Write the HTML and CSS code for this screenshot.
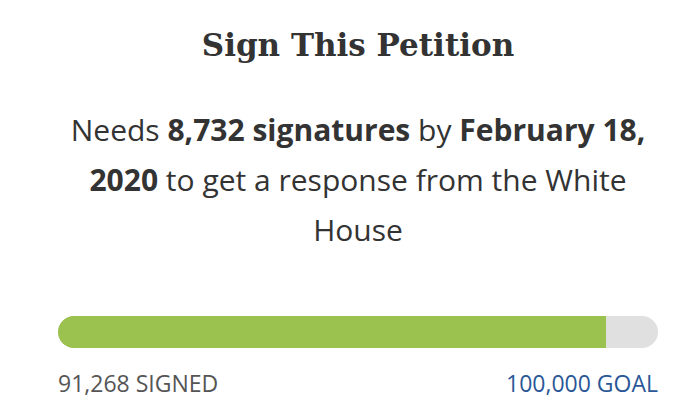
FILE: index.html
```html
<!DOCTYPE html>
<html lang="en">
<head>
    <meta charset="UTF-8" />
    <title>Sign This Petition</title>
    <link rel="stylesheet" href="styles.css">
</head>
<body>
    <div class="peticao">
        <h2 class="titulo">Sign This Petition</h2>
        <p class="meta">Needs <strong>8,732 signatures</strong> by <strong>February 18, 2020</strong> to get a response from the White House</p>

        <div class="barra">
            <div class="progresso" style="width: 91.268%"></div>
        </div>

        <div class="contagem">
            <span class="assinadas">91,268 SIGNED</span>
            <span class="objetivo">100,000 GOAL</span>
        </div>
    </div>
</body>
</html>
```

FILE: styles.css
```css
body {
    margin: 0;
    background-color: #fff;
    font-family: "Open Sans", Lato, sans-serif;
    color: #333;
}

.peticao {
    width: 600px;
    margin-left: 58px;
    padding-top: 21px;
}

.titulo {
    margin: 0;
    text-align: center;
    font-family: "DejaVu Serif", serif;
    font-weight: bold;
    font-size: 31px;
    line-height: 48px;
    color: #333;
}

.meta {
    margin: 36px 0 0;
    text-align: center;
    font-size: 30px;
    line-height: 50px;
}

.meta strong {
    font-weight: bold;
}

.barra {
    margin-top: 61px;
    height: 32px;
    border-radius: 16px;
    background-color: #e0e0e0;
    overflow: hidden;
}

.progresso {
    height: 100%;
    background-color: #9bc14e;
}

.contagem {
    display: flex;
    justify-content: space-between;
    margin-top: 19px;
    font-size: 23px;
}

.assinadas {
    color: #555;
}

.objetivo {
    color: #2b5797;
}
```
